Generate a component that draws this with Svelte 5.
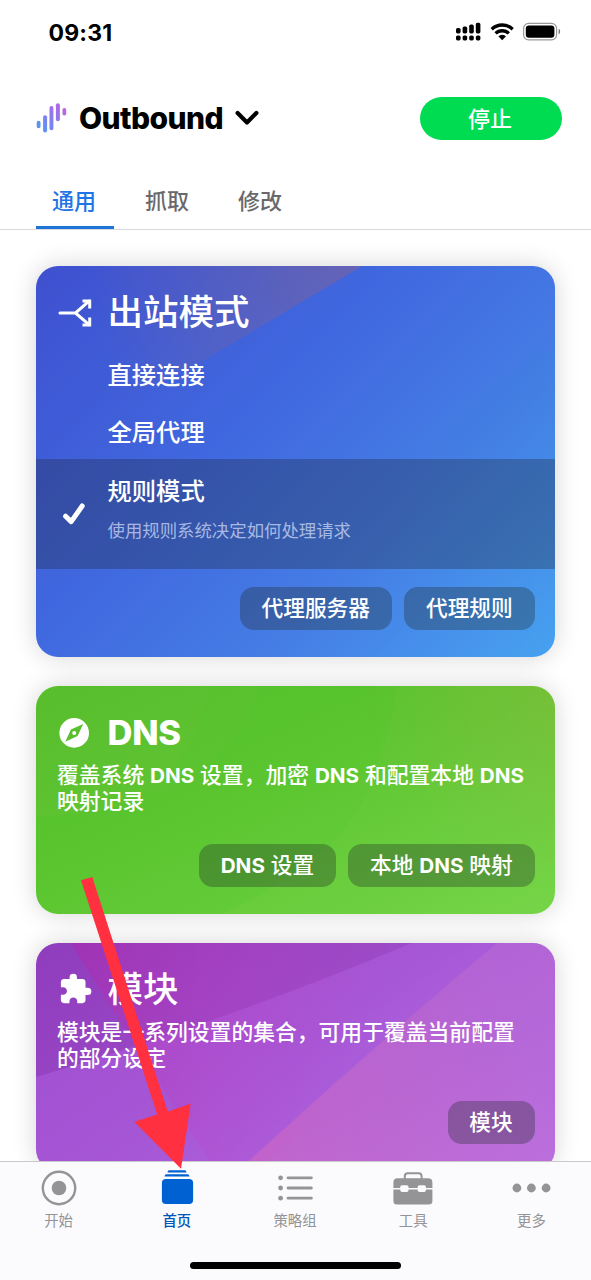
<script>
  const tabs = ['通用', '抓取', '修改'];
  const modes = ['直接连接', '全局代理'];
  const nav = [
    { id: 'start', label: '开始' },
    { id: 'home', label: '首页' },
    { id: 'policy', label: '策略组' },
    { id: 'tools', label: '工具' },
    { id: 'more', label: '更多' }
  ];
</script>

<div class="screen">
  <div class="status">
    <span class="time">09:31</span>
    <svg class="sys" width="106" height="20" viewBox="0 0 106 20">
      <g fill="#000">
        <rect x="1" y="6" width="4.6" height="5.4" rx="1.6" />
        <rect x="7.6" y="4.6" width="4.6" height="6.8" rx="1.6" />
        <rect x="14.2" y="2.6" width="4.6" height="8.8" rx="1.6" />
        <rect x="20.8" y=".8" width="4.6" height="10.6" rx="1.6" />
        <rect x="1" y="13.4" width="4.6" height="5" rx="1.6" />
        <rect x="7.6" y="13.4" width="4.6" height="5" rx="1.6" />
        <rect x="14.2" y="13.4" width="4.6" height="5" rx="1.6" />
        <rect x="20.8" y="13.4" width="4.6" height="5" rx="1.6" />
      </g>
      <g fill="none" stroke="#000" stroke-width="3.3">
        <path d="M36.7 7.2a15.2 15.2 0 0 1 21 0" />
        <path d="M40.6 11.4a9.5 9.5 0 0 1 13.2 0" />
      </g>
      <path d="M43.4 14.2a5.4 5.4 0 0 1 7.6 0l-3.8 4z" fill="#000" />
      <rect x="68.6" y="1.4" width="33" height="16.4" rx="5" fill="none" stroke="#999" stroke-width="1.2" />
      <rect x="70.8" y="3.5" width="28.6" height="12.2" rx="3.2" fill="#000" />
      <path d="M103.6 6.8c2 .6 2 5 0 5.6z" fill="#777" />
    </svg>
  </div>

  <header>
    <svg width="32" height="32" viewBox="0 0 32 32">
      <defs>
        <linearGradient id="wave" x1="0" y1="28" x2="30" y2="4" gradientUnits="userSpaceOnUse">
          <stop offset="0" stop-color="#4a9cf2" />
          <stop offset="1" stop-color="#c45ee8" />
        </linearGradient>
      </defs>
      <g fill="url(#wave)">
        <rect x=".7" y="18.8" width="3.8" height="7.4" rx="1.9" />
        <rect x="7.1" y="13.2" width="4" height="17.4" rx="2" />
        <rect x="13.5" y="4" width="3.9" height="24.2" rx="1.9" />
        <rect x="19.9" y="1.2" width="4" height="18" rx="2" />
        <rect x="26.5" y="6" width="3.7" height="7.6" rx="1.8" />
      </g>
    </svg>
    <h1>Outbound</h1>
    <svg class="chev" width="24" height="16" viewBox="0 0 24 16">
      <path d="M2.6 3 12 12.4 21.4 3" fill="none" stroke="#000" stroke-width="4.2" stroke-linecap="round" stroke-linejoin="round" />
    </svg>
    <button class="stop">停止</button>
  </header>

  <nav class="tabs">
    {#each tabs as t, i}
      <span class:active={i === 0}>{t}</span>
    {/each}
  </nav>

  <main>
    <section class="card blue">
      <svg class="art" viewBox="0 0 519 391" preserveAspectRatio="none">
        <defs>
          <linearGradient id="warm" x1="60" y1="40" x2="330" y2="0" gradientUnits="userSpaceOnUse">
            <stop offset="0" stop-color="#a06060" stop-opacity="0" />
            <stop offset="1" stop-color="#a06078" stop-opacity=".4" />
          </linearGradient>
          <linearGradient id="cool" x1="519" y1="80" x2="300" y2="200" gradientUnits="userSpaceOnUse">
            <stop offset="0" stop-color="#2890d0" stop-opacity=".09" />
            <stop offset="1" stop-color="#2890d0" stop-opacity="0" />
          </linearGradient>
        </defs>
        <path d="M0 0H326L170 93Q110 125 0 160z" fill="url(#warm)" />
        <path d="M519 80V391H0Q250 240 519 80z" fill="url(#cool)" />
      </svg>
      <h2>
        <svg width="36" height="34" viewBox="0 0 36 34">
          <g fill="none" stroke="#fff" stroke-width="3">
            <path d="M2 17H17.5L31 5.2M17.5 17L31 28.6" stroke-linecap="round" />
            <path d="M24.5 4.9H31.7V12.4M24.5 29.1H31.7V21.6" stroke-width="3" />
          </g>
        </svg>
        <span>出站模式</span>
      </h2>
      {#each modes as m}
        <div class="mode">{m}</div>
      {/each}
      <div class="picked">
        <svg width="26" height="26" viewBox="0 0 26 26">
          <path d="M4.6 15.2 10.2 20.6 21.2 5" fill="none" stroke="#fff" stroke-width="5" stroke-linecap="round" stroke-linejoin="round" />
        </svg>
        <div>
          <b>规则模式</b>
          <small>使用规则系统决定如何处理请求</small>
        </div>
      </div>
      <div class="actions"><button>代理服务器</button><button>代理规则</button></div>
    </section>

    <section class="card green">
      <svg class="art" viewBox="0 0 519 228" preserveAspectRatio="none">
        <defs>
          <radialGradient id="olive" cx="519" cy="10" r="190" gradientUnits="userSpaceOnUse">
            <stop offset="0" stop-color="#a0b040" stop-opacity=".32" />
            <stop offset="1" stop-color="#a0b040" stop-opacity="0" />
          </radialGradient>
        </defs>
        <path d="M0 0H174Q155 105 55 126L0 131z" fill="#7ac840" fill-opacity=".12" />
        <path d="M224 0H360Q348 90 308 145Q250 200 184 228H0V131Q180 125 224 0z" fill="#3cc820" fill-opacity=".07" />
        <rect width="519" height="228" fill="url(#olive)" />
      </svg>
      <h2>
        <svg width="36" height="34" viewBox="0 0 36 34">
          <path fill="#fff" fill-rule="evenodd" d="M16.2 2.1a14.8 14.8 0 1 0 0 29.6a14.8 14.8 0 0 0 0-29.6zM25.2 7.9 19.6 20 7.3 25.8 12.9 13.5z" />
          <circle cx="16.2" cy="16.9" r="2" fill="#fff" />
        </svg>
        <span class="latin">DNS</span>
      </h2>
      <p>覆盖系统 <i>DNS</i> 设置，加密 <i>DNS</i> 和配置本地 <i>DNS</i><br />映射记录</p>
      <div class="actions"><button><i>DNS</i> 设置</button><button>本地 <i>DNS</i> 映射</button></div>
    </section>

    <section class="card purple">
      <svg class="art" viewBox="0 0 519 228" preserveAspectRatio="none">
        <defs>
          <linearGradient id="rose" x1="230" y1="228" x2="500" y2="100" gradientUnits="userSpaceOnUse">
            <stop offset="0" stop-color="#e070b8" stop-opacity=".4" />
            <stop offset="1" stop-color="#c070d0" stop-opacity=".4" />
          </linearGradient>
          <linearGradient id="magenta" x1="40" y1="0" x2="330" y2="90" gradientUnits="userSpaceOnUse">
            <stop offset="0" stop-color="#c01ca0" stop-opacity=".32" />
            <stop offset=".55" stop-color="#c838c0" stop-opacity=".2" />
            <stop offset="1" stop-color="#c838c0" stop-opacity="0" />
          </linearGradient>
        </defs>
        <path d="M0 134Q190 78 376 0H519V228H0z" fill="#b266e6" fill-opacity=".42" />
        <path d="M35 0H519L217 228H180Q100 105 35 0z" fill="url(#magenta)" />
        <path d="M461 0H519V228H202Q330 110 461 0z" fill="url(#rose)" />
      </svg>
      <h2>
        <svg class="puzzle" width="36" height="34" viewBox="0 0 24 24" preserveAspectRatio="none">
          <path fill="#fff" d="M20.4 11.2H19V7c0-1.1-.9-2-2-2h-3.7V3.7a2.45 2.45 0 0 0-4.9 0V5H4.6c-1.1 0-2 .9-2 2v3.8H4c1.45 0 2.65 1.2 2.65 2.65S5.45 16.1 4 16.1H2.6v3.9c0 1.1.9 2 2 2h3.7v-1.4c0-1.45 1.2-2.6 2.6-2.6s2.6 1.15 2.6 2.6V22H17c1.1 0 2-.9 2-2v-3.8h1.4a2.5 2.5 0 0 0 0-5z" />
        </svg>
        <span>模块</span>
      </h2>
      <p>模块是一系列设置的集合，可用于覆盖当前配置<br />的部分设定</p>
      <div class="actions"><button>模块</button></div>
    </section>
  </main>

  <footer>
    <div class="bar">
      {#each nav as n}
        <div class="item" class:on={n.id === 'home'}>
          <svg width="42" height="36" viewBox="0 0 42 36" fill="currentColor">
            {#if n.id === 'start'}
              <circle cx="21" cy="18" r="16.2" fill="none" stroke="currentColor" stroke-width="2.4" />
              <circle cx="21" cy="18" r="7.3" />
            {:else if n.id === 'home'}
              <path d="M11.5 2.4Q11.7.2 13.2.2H28.8Q30.3.2 30.5 2.4z" />
              <path d="M8.5 6.5Q8.8 4.3 10.5 4.3H31.5Q33.2 4.3 33.5 6.5z" />
              <rect x="5.9" y="9" width="31.2" height="25" rx="4" />
            {:else if n.id === 'policy'}
              <circle cx="6.6" cy="7.8" r="2.4" /><circle cx="6.6" cy="18" r="2.4" /><circle cx="6.6" cy="28.2" r="2.4" />
              <path d="M14 7.8H37.4M14 18H37.4M14 28.2H37.4" stroke="currentColor" stroke-width="2.8" stroke-linecap="round" />
            {:else if n.id === 'tools'}
              <path d="M11.8 9V6.2Q11.8 3.2 14.8 3.2H25.6Q28.6 3.2 28.6 6.2V9" fill="none" stroke="currentColor" stroke-width="2" />
              <path d="M4.6 8.2H35Q39.4 8.2 39.4 12.4V18H33V17.2Q33 15.2 31 15.2H26.6Q24.6 15.2 24.6 17.2V18H15.6V17.2Q15.6 15.2 13.6 15.2H9.2Q7.2 15.2 7.2 17.2V18H.4V12.4Q.4 8.2 4.6 8.2z" />
              <path d="M.4 19.6H7.2V20Q7.2 22 9.2 22H13.6Q15.6 22 15.6 20V19.6H24.6V20Q24.6 22 26.6 22H31Q33 22 33 20V19.6H39.4V31Q39.4 34.6 35.8 34.6H4Q.4 34.6 .4 31z" />
            {:else}
              <circle cx="5.9" cy="18" r="4.4" /><circle cx="20.4" cy="18" r="4.4" /><circle cx="35.1" cy="18" r="4.4" />
            {/if}
          </svg>
          <span>{n.label}</span>
        </div>
      {/each}
    </div>
    <div class="grip"></div>
  </footer>

  <svg class="pointer" width="60" height="296" viewBox="0 0 60 296">
    <path d="M1 4.2 12.3 1 87.8 235.6 110.7 227.7 101 292.7 54.3 245.7 77.2 238.4z" fill="#ff3040" />
  </svg>
</div>

<style>
  :global(body) {
    background: #fff;
  }
  .screen {
    position: relative;
    width: 591px;
    height: 1280px;
    overflow: hidden;
    display: flex;
    flex-direction: column;
    font-family: Inter, 'Noto Sans CJK SC', sans-serif;
    background: #fff;
  }
  svg {
    display: block;
    flex: none;
  }
  button {
    border: 0;
    padding: 0;
    font-family: inherit;
    color: #fff;
  }
  .status {
    height: 64px;
    flex: none;
    display: flex;
    align-items: center;
    justify-content: space-between;
    padding: 0 30px 0 48.5px;
    box-sizing: border-box;
  }
  .time {
    font-size: 23px;
    font-weight: 700;
    letter-spacing: 0.2px;
    margin-top: 1px;
  }
  header {
    height: 108px;
    flex: none;
    display: flex;
    align-items: center;
    padding: 0 29px 0 36px;
  }
  h1 {
    margin: 0 0 0 11px;
    width: 145px;
    white-space: nowrap;
    font-size: 30px;
    font-weight: 800;
    letter-spacing: -0.6px;
    line-height: 36px;
  }
  .chev {
    margin-left: 11px;
  }
  .stop {
    margin-left: auto;
    width: 142px;
    height: 43px;
    border-radius: 22px;
    background: #00dc52;
    font-size: 22px;
    font-weight: 500;
    padding: 0 2px 3px 0;
  }
  .tabs {
    height: 58px;
    flex: none;
    box-sizing: border-box;
    border-bottom: 1px solid #d9d9db;
    display: flex;
    align-items: flex-end;
    gap: 15px;
    padding-left: 36px;
  }
  .tabs span {
    box-sizing: border-box;
    width: 78px;
    height: 57px;
    line-height: 58px;
    padding-right: 2px;
    text-align: center;
    font-size: 22px;
    font-weight: 500;
    color: #69696c;
    border-bottom: 3px solid transparent;
  }
  .tabs .active {
    color: #1f74e6;
    border-color: #1f74d8;
  }
  main {
    flex: 1;
    min-height: 0;
    overflow: hidden;
    display: flex;
    flex-direction: column;
    gap: 29px;
    padding: 36px 36px 0;
  }
  .card {
    position: relative;
    flex: none;
    box-sizing: border-box;
    overflow: hidden;
    height: 228px;
    border-radius: 22px;
    color: #fff;
    isolation: isolate;
    box-shadow: 0 0 24px rgba(0, 0, 0, 0.17);
    display: flex;
    flex-direction: column;
    padding-top: 18px;
  }
  .art {
    position: absolute;
    inset: 0;
    width: 100%;
    height: 100%;
    z-index: -1;
  }
  .blue {
    height: 391px;
    padding-top: 17px;
    background: linear-gradient(135deg, #3f50cf 0%, #4068df 40%, #457de5 68%, #48a2f1 100%);
  }
  .green {
    background: linear-gradient(156deg, #53bd2a 0%, #5ec632 45%, #76d548 100%);
  }
  .purple {
    background: linear-gradient(145deg, #8f3cbd 0%, #9d4bc8 45%, #b674e6 100%);
  }
  h2 {
    margin: 0;
    height: 58px;
    flex: none;
    display: flex;
    align-items: center;
    gap: 13.5px;
    padding-left: 22px;
    font-size: 35.5px;
    font-weight: 500;
    line-height: 58px;
  }
  .latin {
    font-size: 34.5px;
    font-weight: 800;
    letter-spacing: -0.3px;
  }
  .puzzle {
    margin: -3px 1px 0 -1px;
  }
  .mode {
    height: 57px;
    flex: none;
    line-height: 57px;
    padding-left: 71.5px;
    font-size: 24.3px;
    font-weight: 500;
  }
  .blue h2 {
    height: 60px;
    margin-bottom: 4px;
    line-height: 60px;
  }
  .blue .mode + .mode {
    height: 55px;
  }
  .picked {
    height: 110px;
    flex: none;
    background: rgba(30, 40, 60, 0.33);
    display: flex;
    align-items: center;
    padding-left: 25px;
    gap: 20.5px;
  }
  .picked div {
    display: flex;
    flex-direction: column;
    gap: 7px;
    margin-top: -9px;
  }
  .picked b {
    font-size: 24.3px;
    font-weight: 500;
    line-height: 36px;
  }
  .picked small {
    font-size: 17.4px;
    line-height: 30px;
    color: rgba(220, 228, 255, 0.7);
  }
  p {
    margin: 1px 0 0;
    padding-left: 21px;
    font-size: 21.8px;
    font-weight: 500;
    line-height: 25.5px;
    white-space: nowrap;
  }
  i {
    font-style: normal;
    font-weight: 700;
    font-size: 20.7px;
  }
  .actions {
    margin-top: auto;
    display: flex;
    justify-content: flex-end;
    gap: 12px;
    padding: 0 20px 27px 0;
  }
  .actions button {
    height: 43px;
    padding: 0 22.3px 0 21.7px;
    border-radius: 14px;
    background: rgba(30, 40, 40, 0.32);
    font-size: 21.7px;
    font-weight: 500;
    line-height: 43px;
    white-space: nowrap;
  }
  footer {
    height: 119px;
    flex: none;
    box-sizing: border-box;
    border-top: 1px solid #c9c9cc;
    background: #fbfbfd;
    display: flex;
    flex-direction: column;
    align-items: center;
    z-index: 1;
  }
  .bar {
    width: 100%;
    flex: 1;
    display: grid;
    grid-template-columns: repeat(5, 1fr);
    padding-top: 8px;
  }
  .item {
    display: flex;
    flex-direction: column;
    align-items: center;
    color: #949496;
    font-size: 14.4px;
    line-height: 20px;
    gap: 5px;
  }
  .item span {
    font-weight: 400;
    padding-right: 1px;
  }
  .on {
    color: #0061d2;
  }
  .on span {
    color: #0055b8;
    font-weight: 500;
  }
  .grip {
    width: 211px;
    height: 7px;
    border-radius: 4px;
    background: #000;
    margin-bottom: 11px;
  }
  .pointer {
    position: absolute;
    left: 80px;
    top: 876px;
    overflow: visible;
    z-index: 2;
  }
</style>
